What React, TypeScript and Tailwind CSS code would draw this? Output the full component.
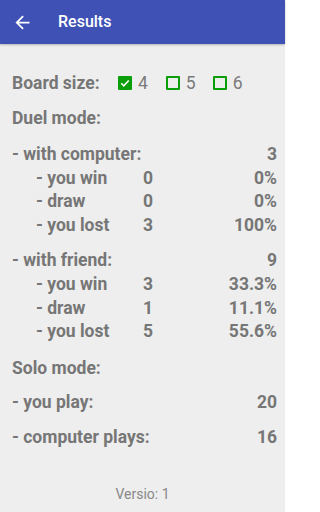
const font = { fontFamily: 'Roboto, "Noto Sans", sans-serif' };

function Check({ checked }: { checked?: boolean }) {
  return checked ? (
    <span className="flex h-[14px] w-[14px] items-center justify-center rounded-[1px] bg-[#0a9e0a]">
      <svg viewBox="0 0 24 24" className="h-[12px] w-[12px]" fill="none" stroke="white" strokeWidth="3.2">
        <path d="M4.5 12.5l5 5L19.5 7" />
      </svg>
    </span>
  ) : (
    <span className="h-[14px] w-[14px] rounded-[1px] border-2 border-[#0a9e0a]" />
  );
}

type Sub = { label: string; count: string; pct: string };

function Group({ title, total, rows }: { title: string; total: string; rows: Sub[] }) {
  return (
    <div>
      <div className="flex h-6 items-center justify-between">
        <span>{title}</span>
        <span>{total}</span>
      </div>
      {rows.map((row) => (
        <div key={row.label} className="flex h-[23.5px] items-center">
          <span className="w-[131px] pl-6">{row.label}</span>
          <span className="w-[40px]">{row.count}</span>
          <span className="flex-1 text-right">{row.pct}</span>
        </div>
      ))}
    </div>
  );
}

export default function App() {
  return (
    <div className="flex h-[512px] w-[285px] flex-col bg-[#eeeeee]" style={font}>
      <header className="flex h-11 items-center bg-[#3f51b5] shadow-[0_1px_2px_rgba(0,0,0,0.25)]">
        <svg viewBox="0 0 24 24" className="ml-[11.5px] h-[21px] w-[21px]" fill="white">
          <path d="M20 11H7.83l5.59-5.59L12 4l-8 8 8 8 1.41-1.41L7.83 13H20v-2z" />
        </svg>
        <h1 className="ml-[25.5px] text-base font-medium text-white">Results</h1>
      </header>

      <main className="flex flex-1 flex-col pl-3 pr-2 text-[17.5px] font-bold text-[#767676]">
        <div className="mt-[27px] flex h-6 items-center">
          <span className="w-[106px]">Board size:</span>
          <div className="flex items-center gap-[6px]">
            <Check checked />
            <span className="font-normal text-[#7a7a7a]">4</span>
          </div>
          <div className="ml-[18px] flex items-center gap-[6px]">
            <Check />
            <span className="font-normal text-[#7a7a7a]">5</span>
          </div>
          <div className="ml-[17px] flex items-center gap-[6px]">
            <Check />
            <span className="font-normal text-[#7a7a7a]">6</span>
          </div>
        </div>

        <div className="mt-[11px] flex h-6 items-center">Duel mode:</div>

        <div className="mt-[12px]">
          <Group
            title="- with computer:"
            total="3"
            rows={[
              { label: '- you win', count: '0', pct: '0%' },
              { label: '- draw', count: '0', pct: '0%' },
              { label: '- you lost', count: '3', pct: '100%' }
            ]}
          />
        </div>

        <div className="mt-[12px]">
          <Group
            title="- with friend:"
            total="9"
            rows={[
              { label: '- you win', count: '3', pct: '33.3%' },
              { label: '- draw', count: '1', pct: '11.1%' },
              { label: '- you lost', count: '5', pct: '55.6%' }
            ]}
          />
        </div>

        <div className="mt-[13px] flex h-6 items-center">Solo mode:</div>

        <div className="mt-[10px] flex h-6 items-center justify-between">
          <span>- you play:</span>
          <span>20</span>
        </div>
        <div className="mt-[11px] flex h-6 items-center justify-between">
          <span>- computer plays:</span>
          <span>16</span>
        </div>

        <p className="mt-[35px] -ml-3 -mr-2 text-center text-[14px] font-normal text-[#888888]">Versio: 1</p>
      </main>
    </div>
  );
}
